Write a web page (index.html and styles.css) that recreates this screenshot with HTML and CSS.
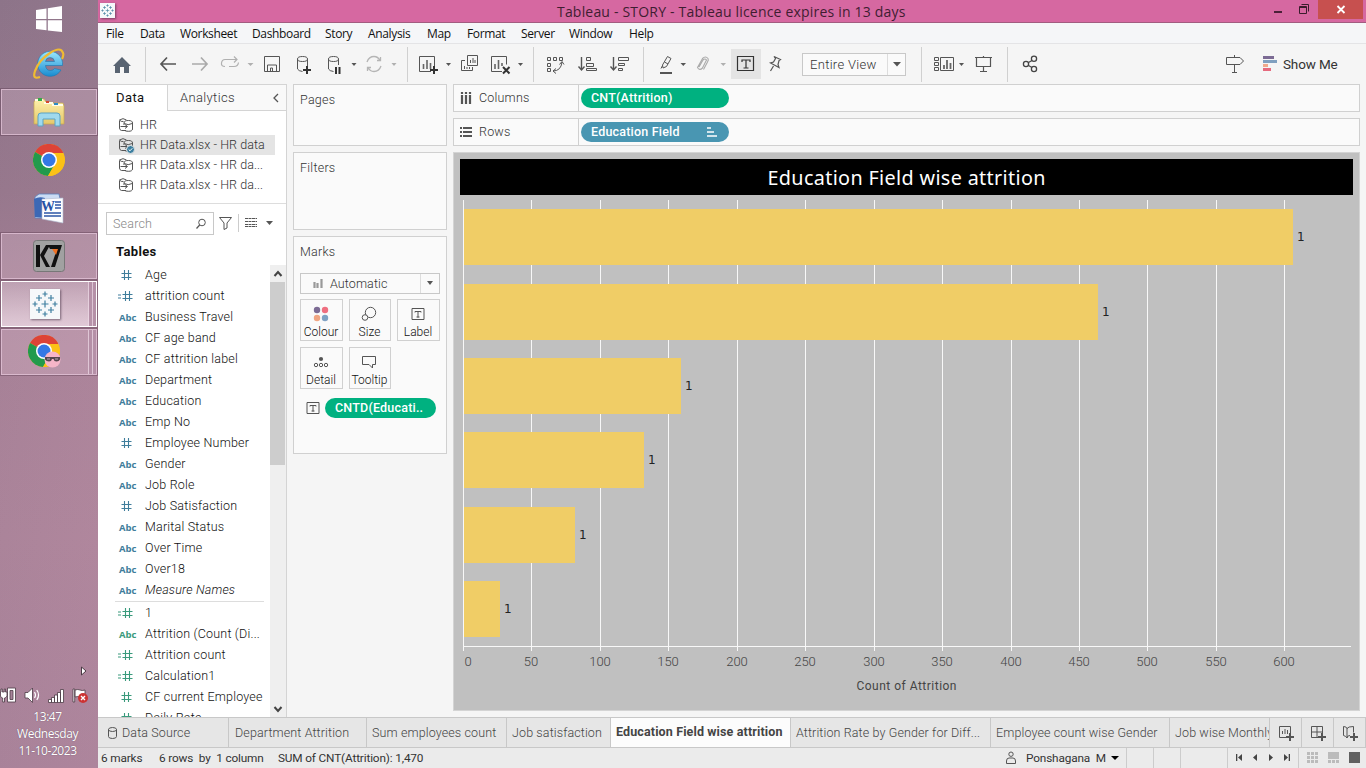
FILE: index.html
```html
<!DOCTYPE html>
<html lang="en">
<head>
<meta charset="utf-8">
<title>Tableau - STORY</title>
<link rel="stylesheet" href="styles.css">
</head>
<body>
<svg class="defs" width="0" height="0">
  <defs>
    <symbol id="db" viewBox="0 0 16 16"><path d="M8 13.500H3.500Q1.500 13 1.500 11V3.500M1.500 3Q5 .3 8.500 3M1.500 3Q3 5 5.500 4.500M6 8V6q0-2.500 4.300-2.500T14.500 6v6q0 2.300-4.200 2.300T7 13M6.200 6.500q4 2.300 8 0M2.500 9.500H9M7 7.500l2.500 2L7 11.500" fill="none" stroke="#555"/></symbol>
    <symbol id="num" viewBox="0 0 16 12"><path d="M6.500 1v10M10.500 1v10M3.500 4.500h10M3.500 8.500h10" stroke="currentColor" stroke-width="1.100"/></symbol>
    <symbol id="cnum" viewBox="0 0 16 12"><path d="M7.500 1v10M11.500 1v10M4.500 4.500h10M4.500 8.500h10M0 5h3M0 8h3" stroke="currentColor" stroke-width="1.100"/></symbol>
    <symbol id="tbox" viewBox="0 0 14 14"><path d="M1 1.500h12v11H1zM4 5.500V4.500h6v1M7 4.500v6M5.500 10h3" fill="none" stroke="#555"/></symbol>
    <symbol id="chrome" viewBox="0 0 32 32"><circle cx="16" cy="16" r="16" fill="#fbc116"/><path d="M16 16 2.100 8A16 16 0 0 1 29.900 8L30 9H16z" fill="#dd4336"/><path d="M2.100 8A16 16 0 0 0 15 32l7-12-6-4z" fill="#229a4c"/><path d="M30 9H16v7l6 4-7 12A16 16 0 0 0 30 9" fill="#fbc116"/><circle cx="16" cy="16" r="8" fill="#fff"/><circle cx="16" cy="16" r="6.500" fill="#3478e5"/></symbol>
    <symbol id="tab" viewBox="0 0 30 30"><path d="M15 11.500v7M11.500 15h7M9 6v6M6 9h6M21 6v6M18 9h6M9 18v6M6 21h6M21 18v6M18 21h6M15 2.500v5M12.500 5h5M15 22.500v5M12.500 25h5M5 12.500v5M2.500 15h5M25 12.500v5M22.500 15h5" stroke="#3f7fa0" stroke-width="1.200"/></symbol>
    <linearGradient id="ieg" x2="0" y2="1"><stop stop-color="#9be7fd"/><stop offset="1" stop-color="#188bd0"/></linearGradient>
    <linearGradient id="fold" x2="0" y2="1"><stop stop-color="#fff2ad"/><stop offset="1" stop-color="#e5c76a"/></linearGradient>
  </defs>
</svg>

<aside class="taskbar">
  <div class="slot s-win"><svg width="28" height="28" viewBox="0 0 28 28"><path d="M1 4 11.500 2.500V13H1zM12.800 2.300 27 0v13H12.800zM1 14.300h10.500v10L1 23zM12.800 14.300H27V26l-14.200-1.500z" fill="#fff"/></svg></div>
  <div class="slot s-ie"><svg width="32" height="32" viewBox="0 0 32 32"><path d="M28 22A12.500 12.500 0 1 1 29.500 17.500H12.500q.5 5 5 5 3 0 4-2zM12.500 13.500h9q-.5-4-4.500-4t-4.500 4" fill="url(#ieg)" fill-rule="evenodd" stroke="#1878b5" stroke-width=".6"/><path d="M7 29Q-1 32 2 23 6 12 17 5T30 5q1 2-1 6" fill="none" stroke="#efbb32" stroke-width="2.200"/></svg></div>
  <div class="slot btn s-exp"><svg width="32" height="32" viewBox="0 0 32 32"><path d="M1 28V6l2-3h8l2 3h5l2 1h10l1 3v18z" fill="url(#fold)" stroke="#c9a94e" stroke-width=".7"/><path d="M2 3h8v2H2zM11 6h9v2h-9zM19 8h11v2H19z" fill="#fffce8"/><path d="M5 2h4v3H5z" fill="#36a94b"/><path d="M13 5h3v2h-3z" fill="#d5492f"/><path d="M21 7h4v2h-4z" fill="#2c8bc5"/><path d="M5 30V20q0-3 3-3h16q3 0 3 3v10h-5v-7H10v7z" fill="#9fd9ee" stroke="#5aa3c4"/></svg></div>
  <div class="slot s-chr"><svg width="32" height="32"><use href="#chrome"/></svg></div>
  <div class="slot s-word"><svg width="32" height="32" viewBox="0 0 32 32"><path d="M2 4 6 1h20l1 5-2 19H2z" fill="#cbdcf4" stroke="#5a80bc" stroke-width=".8"/><path d="M1 6q5-3 11-1v20L2 24z" fill="#3c68b5"/><path d="m9 6 21-1v25L9 26z" fill="#fcfdff" stroke="#aebbd0" stroke-width=".6"/><path d="M22 9h6M22 12h6M22 15h6M11 20h17M11 23h17" stroke="#2b56a6" stroke-width="1.700"/><text x="8" y="18" class="word">W</text></svg></div>
  <div class="slot btn s-k7"><svg width="32" height="32" viewBox="0 0 32 32"><rect x=".5" y=".5" width="31" height="31" rx="3" fill="#a1a1a1" stroke="#777"/><path d="M3 5h4v22H3zM7 15l6-10h4l-6 11 6 11h-4z" fill="#111"/><path d="M15 5h14l-7 22h-4l6-18h-7z" fill="#111"/><path d="M19 9h6l-2 6z" fill="#f17224"/></svg></div>
  <div class="slot btn stack active s-tab"><svg class="tile" width="30" height="30"><use href="#tab"/></svg></div>
  <div class="slot btn stack s-chr2"><svg width="34" height="34" viewBox="0 0 34 34"><use href="#chrome" width="32" height="32"/><circle cx="24.500" cy="24.500" r="8" fill="#f6b5c8"/><path d="M17 22h15v2.500q-1 2-3.500 2t-3-2.500h-1.500q-.5 2.500-3 2.500T17 24.500z" fill="#55474e"/><path d="M19 24h3M27 24h3" stroke="#bba8b2"/></svg></div>
  <div class="tray-gap"><svg width="8" height="10" viewBox="0 0 8 10"><path d="M1.500 1v8L6 5z" fill="#fff" stroke="#4a3a44"/></svg></div>
  <div class="tray">
    <svg width="98" height="20" viewBox="0 685 98 20"><g stroke="#4b3b45" stroke-width=".8" fill="#fff"><path d="M7.500 688h8v14h-8z"/><path d="M10 690.500h3v9h-3z" fill="#a8839a"/><path d="M1 689h1.300v3h2v-3H5.500v3H7v4q-1 2-2.500 2v4H2.700v-4Q.8 698 .5 696v-4H1z"/><path d="M25 692.500h3l4.500-4.500v14.500l-4.500-4.500h-3z"/><path d="M48.500 699.500h3v3h-3zM51.500 697.500h3v5h-3zM54.500 695h3v7.500h-3zM57.500 692.500h3v10h-3zM60.500 689.500h3v13h-3z"/><path d="M73 689h1.700v13H73zM75 690q3-1 5 0t5 0v7q-3 1-5 0t-5 0z"/></g><path d="M34.500 692q2 3 0 6M36.800 690q3.500 5 0 10" fill="none" stroke="#fff" stroke-width="1.200"/><circle cx="83" cy="698" r="5" fill="#cc3333"/><path d="m81 696 4 4m0-4-4 4" stroke="#fff" stroke-width="1.400"/></svg>
  </div>
  <div class="clock"><span>13:47</span><span>Wednesday</span><span>11-10-2023</span></div>
</aside>

<main class="app">
  <header class="titlebar">
    <svg class="tile small" width="15" height="15"><use href="#tab"/></svg>
    <span class="wtitle">Tableau - STORY - Tableau licence expires in 13 days</span>
    <svg class="wctl" width="98" height="22" viewBox="1268 0 98 22"><path d="M1274 12h8" stroke="#4b2038" stroke-width="2"/><path d="M1299.500 6.500h7v7h-7zM1299 7.500h8M1301.500 4.500h7v7" fill="none" stroke="#3a1d2d"/><path d="M1318 0h45v19h-45z" fill="#c7504f"/><path d="m1337.500 6 7 7m0-7-7 7" stroke="#fff" stroke-width="1.800"/></svg>
  </header>
  <nav class="menu"><span class="m1">File</span><span class="m2">Data</span><span class="m3">Worksheet</span><span class="m4">Dashboard</span><span class="m5">Story</span><span class="m6">Analysis</span><span class="m7">Map</span><span class="m8">Format</span><span class="m9">Server</span><span class="m10">Window</span><span>Help</span></nav>
  <div class="toolbar">
    <svg class="sep" width="48" viewBox="98 44 48 40"><path d="m113 66 9-9 9 9h-2v7h-5v-6h-4v6h-5v-7z" fill="#586371"/></svg>
    <svg width="44" viewBox="146 44 44 40"><path d="M161 64h15m-9-6.500-6 6.500 6 6.500" stroke="#555" stroke-width="1.700"/></svg>
    <svg width="20" viewBox="190 44 20 40"><path d="M207 64h-15m9-6.500 6 6.500-6 6.500" stroke="#aaa" stroke-width="1.700"/></svg>
    <svg width="38" viewBox="210 44 38 40"><path d="M225 66.500q-4 0-3.500-3.500t3.500-3.500h12m-3-3 3 3-3 3M229 66.500h5q4 0 4.500-4" stroke="#b0b0b0" stroke-width="1.200"/></svg>
    <svg width="5" viewBox="248 44 5 40"><path d="M247.500 63h6l-3 3z" fill="#b0b0b0"/></svg>
    <svg width="38" viewBox="253 44 38 40"><path d="M264.500 56.500h15v15h-15zM267.500 71v-6h9v6M270.500 71v-3h2v3" stroke="#555"/></svg>
    <svg width="26" viewBox="291 44 26 40"><path d="M297.500 59v10q1 2 5 2.500M297.500 59q0-2.500 5-2.500t5 2.500-5 2.500-5-2.500M307.500 59v7" stroke="#555"/><path d="M303 70h8m-4-4v8" stroke="#333" stroke-width="2"/></svg>
    <svg width="34" viewBox="317 44 34 40"><path d="M328.500 59v10q1 2 5 2.500M328.500 59q0-2.500 5-2.500t5 2.500-5 2.500-5-2.500M338.500 59v6" stroke="#555"/><path d="M336 67v7m3.500-7v7" stroke="#333" stroke-width="2"/></svg>
    <svg width="6" viewBox="351 44 6 40"><path d="M351.500 63h5l-2.500 3z" fill="#555"/></svg>
    <svg width="34" viewBox="357 44 34 40"><path d="M367 62q2-5.500 7-5.500 4 0 6 4m-3 0h3.500v-3.500M381 66q-2 5.500-7 5.500-4 0-6-4m3 0h-3.500v3.500" stroke="#b5b5b5" stroke-width="1.300"/></svg>
    <svg width="6" viewBox="391 44 6 40"><path d="M391.500 63h5l-2.500 3z" fill="#b0b0b0"/></svg>
    <svg class="sep" width="11" viewBox="397 44 11 40"></svg>
    <svg width="38" viewBox="408 44 38 40"><path d="M431 71.500h-11.500v-15h15v10" stroke="#555"/><path d="M423.500 69v-5m3.500 5v-9m3.500 9v-6" stroke="#666" stroke-width="1.600"/><path d="M430 70h8m-4-4v8" stroke="#333" stroke-width="2"/></svg>
    <svg width="5" viewBox="446 44 5 40"><path d="M446 63h5l-2.500 3z" fill="#555"/></svg>
    <svg width="36" viewBox="451 44 36 40"><path d="M467.500 55.500h10v10h-10zM465 60.500h-3.500v10h11V67M470.500 63v-3m2.500 3v-5m2 5v-3M464.500 69v-3m2.500 3v-2m2.500 2v-2" stroke="#555"/></svg>
    <svg width="30" viewBox="487 44 30 40"><path d="M502 71.500h-10.500v-15h15v8" stroke="#555"/><path d="M495 69v-5m3.500 5v-9m3.500 6v-3" stroke="#666" stroke-width="1.600"/><path d="m503 67 6.500 6.500m0-6.500-6.500 6.500" stroke="#333" stroke-width="2"/></svg>
    <svg width="6" viewBox="517 44 6 40"><path d="M518 63h5l-2.500 3z" fill="#555"/></svg>
    <svg class="sep" width="11" viewBox="523 44 11 40"></svg>
    <svg width="42" viewBox="534 44 42 40"><path d="M547.500 57.500h3v3h-3zM553.500 57.500h3v3h-3zM559.500 57.500h3v3h-3zM547.500 63.500h3v3h-3zM547.500 68.500h3v3h-3zM553 71q8 0 9-9m-2.500 2.500 2.500-3 2 3M556 68.500l-3 2.500 3 2.500" stroke="#555"/></svg>
    <svg width="24" viewBox="576 44 24 40"><path d="M581.500 57v13m-3-3.500 3 3.500 3-3.500" stroke="#555" stroke-width="1.400"/><path d="M586.500 57.500h4v3h-4zM586.500 63.500h7v3h-7zM586.500 68.500h10v2h-10z" stroke="#555"/></svg>
    <svg width="40" viewBox="600 44 40 40"><path d="M613.500 57v13m-3-3.500 3 3.500 3-3.500" stroke="#555" stroke-width="1.400"/><path d="M618.500 57.500h10v3h-10zM618.500 63.500h6v2h-6zM618.500 68.500h4v2h-4z" stroke="#555"/></svg>
    <svg class="sep" width="4" viewBox="640 44 4 40"></svg>
    <svg width="36" viewBox="644 44 36 40"><path d="m662.500 65 5-8.500 3.500 2-4.500 8-3.500 1.500zM661 68.500l1.500-3m2-3.500 3.500 2" stroke="#555"/><path d="M660 73h12" stroke="#555" stroke-width="2"/></svg>
    <svg width="7" viewBox="680 44 7 40"><path d="M680.500 63h5.500l-2.700 3z" fill="#555"/></svg>
    <svg width="32" viewBox="687 44 32 40"><path d="m699 67 4-7q2-2 3.500 0l-4 8q-3 3-5-.5l5-9q3-3 5.500 0 .8 1.500-.5 3.500l-4 7.500" stroke="#aaa" stroke-width="1.100"/></svg>
    <svg width="12" viewBox="719 44 12 40"><path d="M720.500 63h5.500l-2.700 3z" fill="#b0b0b0"/></svg>
    <svg class="on" width="30" viewBox="731 49 30 30"><path d="M737.500 56.500h16v14h-16zM742 62v-2h8v2M746 60v8m-2.500 0h5" stroke="#333" stroke-width="1.200"/></svg>
    <svg width="41" viewBox="761 44 41 40"><path d="m774 56.500 6.500 3-1.500 1-1 4 1 3-8.500-4.500 3-1 2-3.500zM773.500 66l-3 5" stroke="#555" stroke-width="1.200"/></svg>
    <div class="select"><span>Entire View</span><i><svg width="8" height="5" viewBox="0 0 8 5"><path d="M0 0h8L4 4.500z" fill="#555"/></svg></i></div>
    <svg class="sep" width="17" viewBox="905 44 17 40"></svg>
    <svg width="36" viewBox="922 44 36 40"><path d="M934.500 57.500h4v3h-4zM934.500 62.500h4v3h-4zM934.500 67.500h4v3h-4zM940.500 57.500h13v13h-13z" stroke="#555"/><path d="M944 69v-4m3 4v-9m3.500 9v-6" stroke="#666" stroke-width="1.800"/></svg>
    <svg width="7" viewBox="958 44 7 40"><path d="M959 63h5l-2.500 3z" fill="#555"/></svg>
    <svg width="38" viewBox="965 44 38 40"><path d="M975 57.500h17M976.500 58v8.500h14V58M983.500 56v2m0 8.500v5m-3.500 0h7" stroke="#555" stroke-width="1.200"/></svg>
    <svg class="sep" width="5" viewBox="1003 44 5 40"></svg>
    <svg width="45" viewBox="1008 44 45 40"><circle cx="1026" cy="64" r="2.600"/><circle cx="1034" cy="58.800" r="2.600"/><circle cx="1034" cy="69" r="2.600"/><path d="m1028.500 62.500 3.500-2m-3.500 5 3.500 2" stroke="#444" stroke-width="1.300"/></svg>
    <div class="fill"></div>
    <svg width="43" viewBox="1220 44 43 40"><path d="M1226.500 57.500h13.500l3.500 3.500-3.500 3.500h-13.500zM1234.500 55v2.500m0 7v8m-2.500 0h5" stroke="#555"/></svg>
    <svg width="20" viewBox="1263 44 20 40"><path d="M1263 56h11v3h-11z" fill="#7c6b94"/><path d="M1263 60h14v3h-14z" fill="#80a0c0"/><path d="M1263 64h5v3h-5z" fill="#efa98c"/><path d="M1263 68h8v3h-8z" fill="#e66a7e"/></svg>
    <span class="showme">Show Me</span>
  </div>

  <div class="work">
    <section class="data">
      <div class="dtabs"><b>Data</b><div><span>Analytics</span><svg width="8" height="10" viewBox="0 0 8 10"><path d="M6 1 2 5l4 4" fill="none" stroke="#555" stroke-width="1.300"/></svg></div></div>
      <div class="sources">
        <p><svg width="16" height="16"><use href="#db"/></svg><span>HR</span></p>
        <p class="sel"><svg width="18" height="18" viewBox="0 0 16 16"><use href="#db" width="16" height="16"/><circle cx="12.500" cy="12.500" r="4" fill="#3c7fa0" stroke="#e4e4e4"/><path d="m10.700 12.500 1.300 1.300 2.300-2.500" fill="none" stroke="#fff"/></svg><span>HR Data.xlsx - HR data</span></p>
        <p><svg width="16" height="16"><use href="#db"/></svg><span>HR Data.xlsx - HR da...</span></p>
        <p><svg width="16" height="16"><use href="#db"/></svg><span>HR Data.xlsx - HR da...</span></p>
      </div>
      <div class="searchrow"><div class="search"><span>Search</span><svg width="12" height="12" viewBox="0 0 12 12"><circle cx="7" cy="4.500" r="3.300" fill="none" stroke="#555"/><path d="M4.700 7 1.500 10.500" stroke="#555" stroke-width="1.200"/></svg></div><svg width="66" height="22" viewBox="214 212 66 22"><path d="M219.500 217.500h12l-4.500 5.500v5l-3 1.500V223z" fill="none" stroke="#555"/><path d="M238.500 214v18" stroke="#ccc"/><path d="M245 218.500h12M245 221.500h12M245 224.500h12M245 226.500h12" stroke="#555" stroke-width="1" stroke-dasharray="3 .5"/><path d="M266 221h7l-3.500 4z" fill="#555"/></svg></div>
      <h2>Tables</h2>
      <div class="listwrap">
        <div class="list">
          <p><svg><use href="#num"/></svg>Age</p>
          <p><svg><use href="#cnum"/></svg>attrition count</p>
          <p><i>Abc</i>Business Travel</p>
          <p><i>Abc</i>CF age band</p>
          <p><i>Abc</i>CF attrition label</p>
          <p><i>Abc</i>Department</p>
          <p><i>Abc</i>Education</p>
          <p><i>Abc</i>Emp No</p>
          <p><svg><use href="#num"/></svg>Employee Number</p>
          <p><i>Abc</i>Gender</p>
          <p><i>Abc</i>Job Role</p>
          <p><svg><use href="#num"/></svg>Job Satisfaction</p>
          <p><i>Abc</i>Marital Status</p>
          <p><i>Abc</i>Over Time</p>
          <p><i>Abc</i>Over18</p>
          <p><i>Abc</i><em>Measure Names</em></p>
          <div class="measures">
            <p><svg><use href="#cnum"/></svg>1</p>
            <p><i>Abc</i>Attrition (Count (Di...</p>
            <p><svg><use href="#cnum"/></svg>Attrition count</p>
            <p><svg><use href="#cnum"/></svg>Calculation1</p>
            <p><svg><use href="#num"/></svg>CF current Employee</p>
            <p><svg><use href="#num"/></svg>Daily Rate</p>
          </div>
        </div>
        <div class="scroll"><svg width="16" height="17" viewBox="0 0 16 17"><path d="m4.500 11 3.500-4 3.500 4" fill="none" stroke="#444" stroke-width="2"/></svg><div class="thumb"></div><svg class="down" width="16" height="17" viewBox="0 0 16 17"><path d="m4.500 7 3.500 4 3.500-4" fill="none" stroke="#444" stroke-width="2"/></svg></div>
      </div>
    </section>

    <section class="cards">
      <div class="card pages">Pages</div>
      <div class="card filters">Filters</div>
      <div class="card marks">
        <div>Marks</div>
        <div class="auto"><svg width="10" height="11" viewBox="0 0 10 11"><path d="M1.500 4v6M4.500 5v5M8.500 1v9" stroke="#999" stroke-width="2.200"/></svg><span>Automatic</span><i><svg width="8" height="5" viewBox="0 0 8 5"><path d="M1 0h6L4 4z" fill="#555"/></svg></i></div>
        <div class="grid">
          <div><svg width="16" height="16" viewBox="0 0 16 16"><circle cx="4" cy="4" r="3.200" fill="#7c6b94"/><circle cx="12" cy="4" r="3.200" fill="#ef6f80"/><circle cx="4" cy="12" r="3.200" fill="#f0a582"/><circle cx="12" cy="12" r="3.200" fill="#7fa2c4"/></svg><span>Colour</span></div>
          <div><svg width="16" height="16" viewBox="0 0 16 16"><circle cx="9.500" cy="6.500" r="5.200" fill="none" stroke="#555"/><circle cx="4" cy="11.500" r="2.800" fill="#fafafa" stroke="#555"/></svg><span>Size</span></div>
          <div><svg width="14" height="16" viewBox="0 -1 14 16"><use href="#tbox" width="14" height="14"/></svg><span>Label</span></div>
          <div><svg width="16" height="16" viewBox="0 0 16 16"><circle cx="8" cy="5" r="2.100" fill="#555"/><g fill="none" stroke="#555"><circle cx="3" cy="11" r="1.700"/><circle cx="8" cy="11" r="1.700"/><circle cx="13" cy="11" r="1.700"/></g></svg><span>Detail</span></div>
          <div><svg width="16" height="16" viewBox="0 0 16 16"><path d="M1.500 2.500h13v8h-3v3.500l-3.500-3.500h-6.500z" fill="none" stroke="#555"/></svg><span>Tooltip</span></div>
        </div>
        <div class="pillrow"><svg width="14" height="14"><use href="#tbox"/></svg><b class="pill green">CNTD(Educati..</b></div>
      </div>
    </section>

    <section class="sheet">
      <div class="shelf"><label><svg width="12" height="12" viewBox="0 0 12 12"><path d="M2 3v9M6 3v9M10 3v9M2 0v2M6 0v2M10 0v2" stroke="#555" stroke-width="2.200"/></svg>Columns</label><b class="pill green">CNT(Attrition)</b></div>
      <div class="shelf"><label><svg width="12" height="12" viewBox="0 0 12 12"><path d="M3 2h9M3 6h9M3 10h9M0 2h2M0 6h2M0 10h2" stroke="#555" stroke-width="1.800"/></svg>Rows</label><b class="pill blue">Education Field<svg width="11" height="10" viewBox="0 0 11 10"><path d="M0 1h4M0 5h7M0 9h10" stroke="#fff" stroke-width="1.600"/></svg></b></div>
      <div class="view">
        <svg width="905" height="557" viewBox="454 153 905 557">
          <path d="M460 159h893v36H460z"/>
          <path class="gl" d="M463.500 200v451M531.500 200v451M600.500 200v451M668.500 200v451M737.500 200v451M805.500 200v451M874.500 200v451M942.500 200v451M1011.500 200v451M1079.500 200v451M1147.500 200v451M1216.500 200v451M1284.500 200v451M463 646.500h888"/>
          <path class="bars" d="M464 209h829v56H464zM464 284h634v56H464zM464 358h217v56H464zM464 432h180v56H464zM464 507h111v56H464zM464 581h36v56H464z"/>
          <text class="vt" x="767.500" y="185" textLength="278">Education Field wise attrition</text>
          <g class="ml"><text x="1297" y="241">1</text><text x="1102" y="316">1</text><text x="685" y="390">1</text><text x="648" y="464">1</text><text x="579" y="539">1</text><text x="504" y="613">1</text></g>
          <g class="ax"><text x="468" y="666">0</text><text x="531" y="666">50</text><text x="600" y="666">100</text><text x="668" y="666">150</text><text x="737" y="666">200</text><text x="805" y="666">250</text><text x="874" y="666">300</text><text x="942" y="666">350</text><text x="1011" y="666">400</text><text x="1079" y="666">450</text><text x="1147" y="666">500</text><text x="1216" y="666">550</text><text x="1284" y="666">600</text></g>
          <text class="at" x="856.500" y="690" textLength="100">Count of Attrition</text>
        </svg>
      </div>
    </section>
  </div>

  <footer class="tabs">
    <div class="t1"><svg width="9" height="12" viewBox="0 0 9 12"><path d="M.5 2.500v7q0 2 4 2t4-2v-7q0-2-4-2t-4 2q0 2 4 2t4-2" fill="none" stroke="#555"/></svg>Data Source</div><div class="t2">Department Attrition</div><div class="t3">Sum employees count</div><div class="t4">Job satisfaction</div><div class="t5">Education Field wise attrition</div><div class="t6">Attrition Rate by Gender for Diff...</div><div class="t7">Employee count wise Gender</div><div class="t8">Job wise Monthly</div>
    <div class="nt"><svg viewBox="1270 718 31 29"><path d="M1288 737.500h-8.500v-11h11v7M1282.500 734v-3m2.500 3v-5m2.500 5v-4"/><path class="pl" d="M1286 737h8m-4-4v8"/></svg></div>
    <div class="nt"><svg viewBox="1302 718 31 29"><path d="M1320 737.500h-8.500v-11h11v7M1317 726.500v11M1311.500 732h11"/><path class="pl" d="M1318 737h8m-4-4v8"/></svg></div>
    <div class="nt"><svg viewBox="1334 718 31 29"><path d="M1350 735.500q-3 0-3 2.500-1-2-3.500-2.500v-9q3 0 3.500 2 1-2 6.500-2v6M1347 728v10"/><path class="pl" d="M1350 737h8m-4-4v8"/></svg></div>
  </footer>
  <div class="status">
    <span class="st1">6 marks</span><span class="st2">6 rows&nbsp; by&nbsp; 1 column</span><span class="st3">SUM of CNT(Attrition): 1,470</span>
    <div class="fill"></div>
    <svg class="person" width="12" height="14" viewBox="0 0 12 14"><circle cx="6" cy="3.200" r="2.200" fill="none" stroke="#555"/><path d="M1.500 12.500V10q0-3 2.500-3h4q2.500 0 2.500 3v2.500z" fill="none" stroke="#555"/></svg>
    <span class="st4">Ponshagana&nbsp; M</span>
    <svg width="255" height="20" viewBox="1111 748 255 20"><path d="M1111 756h8l-4 4z" fill="#000"/><path d="M1126.500 748v20M1153.500 748v20M1180.500 748v20M1227.500 748v20M1298.500 748v20" stroke="#ccc"/><path d="M1236 754h1.300v7H1236zM1242 754v7l-4-3.500zM1257 754v7l-4-3.500zM1269 754v7l4-3.500zM1284 754v7l4-3.500zM1288.700 754h1.300v7h-1.300z" fill="#444"/><path d="M1307 752h3v3h-3zm4 0h3v3h-3zm4 0h3v3h-3zm-8 4h3v3h-3zm4 0h3v3h-3zm4 0h3v3h-3zm-8 4h3v3h-3zm4 0h3v3h-3zm4 0h3v3h-3zM1328 752h11v7h-11zm0 8h3v3h-3zm4 0h3v3h-3zm4 0h3v3h-3z" fill="#bbb"/><path d="M1349 752h11v11h-11z" fill="#606060"/></svg>
  </div>
</main>
</body>
</html>
```
FILE: styles.css
```css
* { box-sizing: border-box; }
body { margin: 0; width: 1366px; height: 768px; overflow: hidden; display: flex; font: 300 12.5px/20px Roboto, "Open Sans", sans-serif; color: #333; background: #f5f5f5; }
p, h2 { margin: 0; }
svg { flex: none; display: block; }
i { font-style: normal; }

.taskbar { width: 98px; flex: none; display: flex; flex-direction: column; background: linear-gradient(100deg, rgba(70,70,90,.08), rgba(255,170,200,.05)), linear-gradient(#93788d, #9c7b90 25%, #ab849a 45%, #ae869c 70%, #a9839a); color: #fff; }
.slot { display: flex; justify-content: center; align-items: center; width: 98px; flex: none; }
.s-win { height: 41px; padding-bottom: 2px; }
.s-ie { height: 46px; }
.btn { height: 46px; border: 1px solid rgba(235,205,225,.65); background: rgba(255,225,240,.2); box-shadow: 0 0 0 1px rgba(80,50,70,.35); width: 96px; margin: 0 1px; }
.s-exp { margin-top: 2px; }
.s-chr { height: 50px; }
.s-word { height: 48px; }
.stack { margin-top: 2px; box-shadow: 0 0 0 1px rgba(80,50,70,.35), inset -3px 0 0 rgba(170,130,155,.8), inset -4px 0 0 rgba(240,220,232,.7), inset -7px 0 0 rgba(170,130,155,.8), inset -8px 0 0 rgba(240,220,232,.7); padding-right: 8px; }
.active { background: linear-gradient(rgba(255,240,248,.3), rgba(255,240,248,.65)); border-color: #fff; }
.tile { background: #f6f8fa; box-shadow: 1px 1px 2px rgba(60,40,60,.6); }
.word { font: bold 14px "Liberation Serif", serif; fill: #2853a5; }
.tray-gap { flex: 1; display: flex; flex-direction: column; justify-content: flex-end; align-items: flex-end; padding: 0 10px 9px 0; }
.tray { height: 20px; }
.clock { height: 63px; padding: 3px 3px 0 0; display: flex; flex-direction: column; align-items: center; font: 12px/17px "Open Sans", sans-serif; letter-spacing: -.45px; text-shadow: 0 0 1px rgba(60,40,60,.7); }

.app { width: 1268px; height: 768px; display: flex; flex-direction: column; }
.titlebar { height: 23px; flex: none; background: #d668a1; border-bottom: 1px solid #a25c80; display: flex; align-items: center; }
.small { margin: 0 0 2px 2px; }
.wtitle { flex: 1; margin-left: 442px; padding-top: 2px; font: 14px/22px "Open Sans", sans-serif; letter-spacing: .19px; color: #3f1d31; white-space: nowrap; }
.menu { height: 21px; flex: none; background: #f5f6f8; border-bottom: 1px solid #e4e4e6; display: flex; padding: 1px 0 0 8px; font: 12px/20px "Open Sans", sans-serif; letter-spacing: -.35px; color: #111; }
.menu span { white-space: nowrap; flex: none; }
.m1 { width: 34px; } .m2 { width: 40px; } .m3 { width: 72px; } .m4 { width: 73px; } .m5 { width: 43px; } .m6 { width: 59px; } .m7 { width: 40px; } .m8 { width: 54px; } .m9 { width: 48px; } .m10 { width: 60px; }

.toolbar { height: 40px; flex: none; display: flex; align-items: center; }
.toolbar > svg { height: 40px; fill: none; overflow: visible; }
.toolbar circle { stroke: #444; stroke-width: 1.3; }
.toolbar .on { height: 30px; background: #e4e4e4; }
.toolbar .sep { border: 0; background: linear-gradient(#d0d0d0, #d0d0d0) right 3px / 1px 35px no-repeat; }
.select { width: 104px; height: 23px; margin-right: -1px; border: 1px solid #c8c8c8; background: #fafafa; display: flex; }
.select span { flex: 1; padding-left: 7px; font-size: 13px; line-height: 21px; letter-spacing: .3px; }
.select i { width: 18px; border-left: 1px solid #ddd; display: flex; align-items: center; justify-content: center; }
.fill { flex: 1; }
.showme { width: 83px; font-size: 13.5px; font-weight: 400; letter-spacing: -.15px; color: #333; }

.work { height: 633px; flex: none; display: flex; }
.data { width: 189px; flex: none; border-right: 1px solid #d4d4d4; background: #fff; display: flex; flex-direction: column; }
.dtabs { height: 27px; flex: none; display: flex; }
.dtabs b { width: 69px; padding-left: 18px; line-height: 26px; font-size: 13px; letter-spacing: .4px; color: #111; border-top: 1px solid #d4d4d4; }
.dtabs div { flex: 1; border: 1px solid #d4d4d4; border-right: 0; background: #f9f9f9; display: flex; justify-content: space-between; align-items: center; padding: 0 6px 0 12px; font-size: 13px; letter-spacing: .35px; }
.sources { height: 93px; flex: none; padding: 4px 11px 0; border-bottom: 1px solid #ddd; }
.sources p { height: 20px; display: flex; align-items: center; padding-left: 9px; letter-spacing: .05px; white-space: nowrap; }
.sources svg { width: 16px; overflow: visible; }
.sources span { margin-left: 6px; }
.sel { background: #e4e4e4; }
.searchrow { height: 30px; flex: none; padding: 8px 0 0 8px; display: flex; }
.search { width: 108px; height: 23px; border: 1px solid #c8c8c8; display: flex; align-items: center; justify-content: space-between; padding: 0 6px; color: #888; letter-spacing: .2px; }
h2 { height: 30px; flex: none; padding: 8px 0 0 18px; font-size: 13px; line-height: 19px; letter-spacing: .35px; color: #111; }
.listwrap { flex: 1; display: flex; overflow: hidden; }
.list { flex: 1; color: #111; letter-spacing: .2px; }
.list p { height: 21px; line-height: 21px; display: flex; align-items: center; white-space: nowrap; }
.list svg { width: 16px; height: 12px; margin: 0 11px 0 20px; color: #3f7d9b; }
.list i { width: 26px; margin-left: 21px; font: bold 9.5px/23px "Open Sans", sans-serif; letter-spacing: 0; padding-top: 2px; color: #3f7d9b; }
.measures { margin: 1px 0 0; padding-top: 0; background: linear-gradient(#ddd, #ddd) 17px 0 / 149px 1px no-repeat; }
.measures p:first-child { height: 22px; padding-top: 1px; }
.measures svg, .measures i { color: #3a9a7c; }
.scroll { width: 16px; margin-top: 1px; background: #efefef; display: flex; flex-direction: column; }
.thumb { height: 183px; background: #cdcdcd; width: 15px; }
.down { margin-top: auto; }

.cards { width: 161px; padding-left: 6px; display: flex; flex-direction: column; gap: 6px; flex: none; letter-spacing: .25px; }
.card { width: 154px; border: 1px solid #d0d0d0; background: #fafafa; padding: 5px 6px; }
.pages { height: 62px; }
.filters { height: 78px; }
.marks { height: 218px; }
.auto { margin-top: 11px; width: 140px; height: 21px; border: 1px solid #c8c8c8; display: flex; align-items: center; padding-left: 12px; }
.auto span { margin-left: 7px; flex: 1; letter-spacing: .1px; }
.auto i { width: 19px; height: 19px; border-left: 1px solid #ddd; display: flex; align-items: center; justify-content: center; }
.grid { margin-top: 5px; display: grid; grid-template-columns: 43px 42px 43px; gap: 6px; grid-auto-rows: 42px; color: #111; }
.grid div { border: 1px solid #d0d0d0; display: flex; flex-direction: column; align-items: center; padding-top: 6px; }
.grid svg { margin-right: 2px; }
.grid span { font-size: 12px; line-height: 20px; letter-spacing: 0; margin-right: 1px; }
.pillrow { display: flex; align-items: center; padding: 9px 0 0 6px; }
.pill { height: 20px; border-radius: 10px; color: #fff; font-size: 12.5px; font-weight: 500; line-height: 20px; padding: 0 11px 0 10px; display: flex; align-items: center; justify-content: space-between; letter-spacing: .2px; white-space: nowrap; }
.pillrow .pill { margin-left: 5px; width: 111px; }
.green { background: #00b180; }
.blue { background: #4996b2; }

.sheet { width: 912px; padding-left: 5px; display: flex; flex-direction: column; }
.shelf { width: 907px; height: 28px; margin-bottom: 6px; border: 1px solid #d0d0d0; background: #fafafa; display: flex; align-items: center; flex: none; }
.shelf label { width: 125px; height: 26px; border-right: 1px solid #d0d0d0; padding-left: 6px; display: flex; align-items: center; gap: 7px; letter-spacing: .2px; }
.shelf .pill { width: 148px; margin-left: 2px; }
.view { width: 907px; height: 559px; flex: none; background: #c0c0c0; border: 1px solid #d4d4d4; }
.gl { stroke: #f8f8f8; fill: none; }
.bars { fill: #f0cd66; }
.vt { font: 19.8px "Noto Sans", sans-serif; fill: #fff; }
.ml { font: 12px "DejaVu Sans", sans-serif; fill: #222; }
.ax { font-size: 13px; fill: #444; text-anchor: middle; }
.at { font-size: 12px; font-weight: 400; fill: #444; }

.tabs { height: 31px; flex: none; background: #e6e6e6; border-top: 1px solid #c8c8c8; border-bottom: 1px solid #c8c8c8; display: flex; font-size: 12.5px; line-height: 30px; color: #444; letter-spacing: .12px; }
.tabs div { flex: none; border-right: 1px solid #c8c8c8; padding-left: 5px; white-space: nowrap; overflow: hidden; }
.tabs .t1 { width: 131px; padding-left: 10px; display: flex; align-items: center; gap: 5px; }
.tabs .t2 { width: 138px; padding-left: 6px; } .t3 { width: 140px; } .t4 { width: 104px; } .t6 { width: 200px; } .t7 { width: 179px; } .t8 { width: 100px; }
.tabs .t5 { width: 180px; background: #fcfcfc; color: #444; font-weight: 700; line-height: 27px; letter-spacing: .13px; }
.tabs .nt { width: 32px; padding: 0; }
.nt svg { width: 31px; height: 29px; fill: none; stroke: #555; }
.nt .pl { stroke-width: 2; }
.status { height: 20px; flex: none; background: #ebebeb; display: flex; align-items: center; color: #333; font-size: 11.8px; font-weight: 400; letter-spacing: -.15px; white-space: nowrap; }
.st1 { width: 61px; padding-left: 3px; } .st2 { width: 119px; } .st4 { width: 85px; margin-left: 9px; }
```
